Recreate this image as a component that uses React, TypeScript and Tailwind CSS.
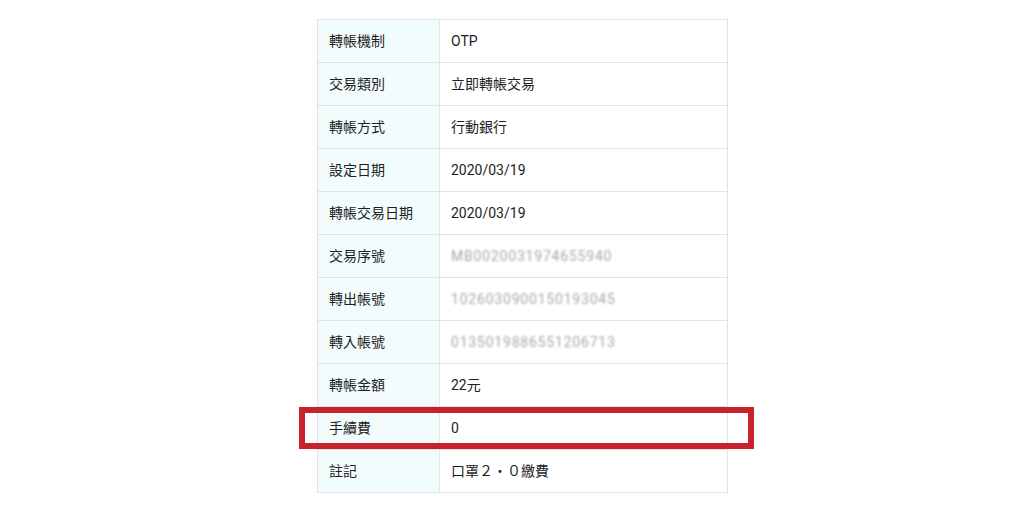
const rows: { label: string; value: string; blur?: boolean }[] = [
  { label: '轉帳機制', value: 'OTP' },
  { label: '交易類別', value: '立即轉帳交易' },
  { label: '轉帳方式', value: '行動銀行' },
  { label: '設定日期', value: '2020/03/19' },
  { label: '轉帳交易日期', value: '2020/03/19' },
  { label: '交易序號', value: 'MB0020031974655940', blur: true },
  { label: '轉出帳號', value: '1026030900150193045', blur: true },
  { label: '轉入帳號', value: '0135019886551206713', blur: true },
  { label: '轉帳金額', value: '22元' },
  { label: '手續費', value: '0' },
  { label: '註記', value: '口罩２・０繳費' },
];

export default function App() {
  return (
    <div
      className="w-[1024px] h-[513px] bg-white flex justify-center pt-[19px] text-[14px] text-[#1e1e1e]"
      style={{ fontFamily: 'Roboto, "Noto Sans CJK TC", sans-serif' }}
    >
      <div className="relative w-[411px] h-fit ml-[21px]">
        <div className="border border-[#dde4e6] border-b-0">
          {rows.map((r) => (
            <div key={r.label} className="flex h-[43px] border-b border-[#dde4e6]">
              <div className="w-[122px] shrink-0 bg-[#f3fcfd] border-r border-[#e3e9eb] flex items-center pl-[11px]">
                {r.label}
              </div>
              <div className="flex-1 flex items-center pl-[11px]">
                {r.blur ? (
                  <span className="text-[#a3a8ab] blur-[1px] tracking-[0.8px]">{r.value}</span>
                ) : (
                  r.value
                )}
              </div>
            </div>
          ))}
        </div>
        <div className="absolute left-[-18px] top-[388px] w-[455px] h-[42px] border-[6px] border-[#c8232c]" />
      </div>
    </div>
  );
}
